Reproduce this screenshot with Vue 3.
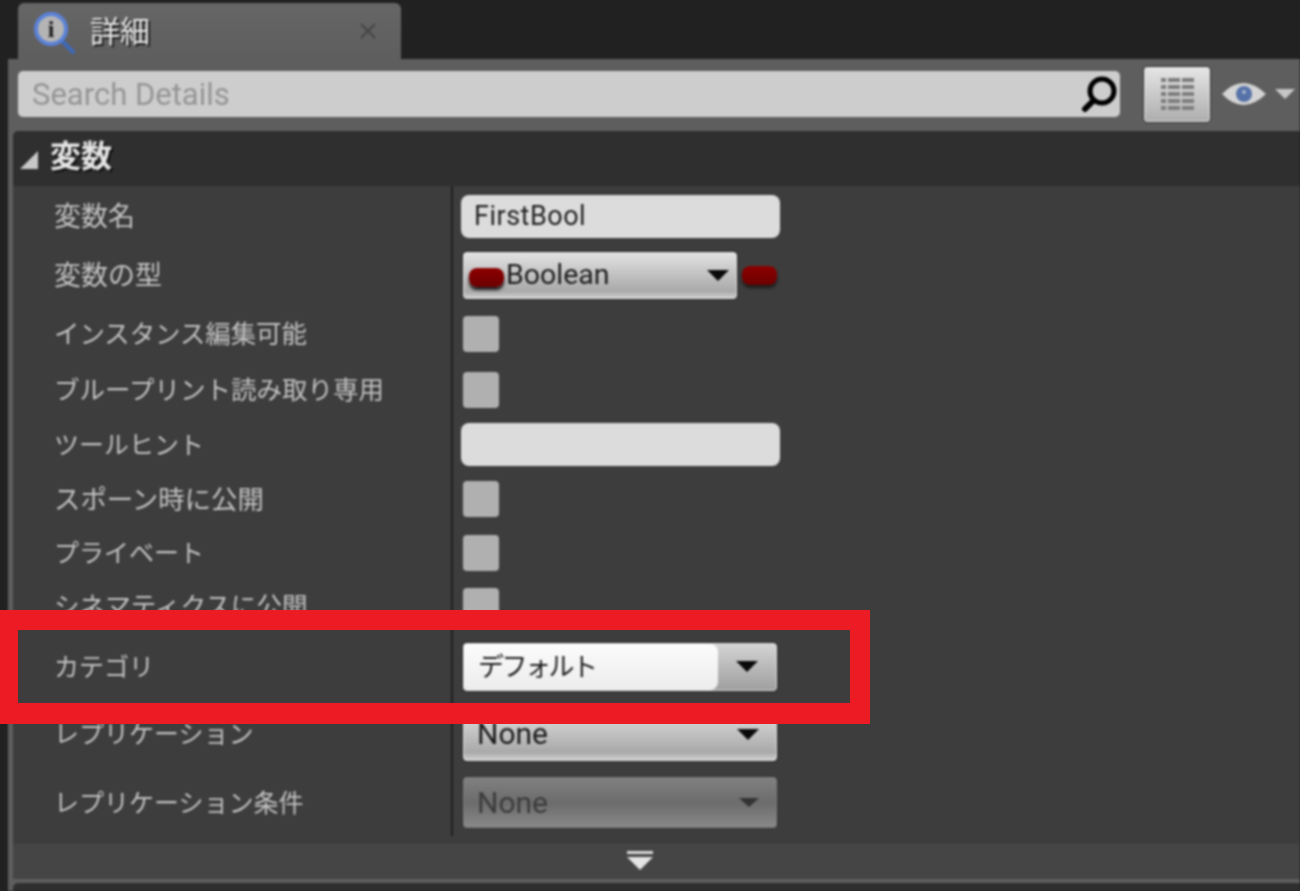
<script setup>
const rows = [
  { label: '変数名', h: 59, size: 27, type: 'text', value: 'FirstBool' },
  { label: '変数の型', h: 59, size: 27, type: 'vartype', value: 'Boolean' },
  { label: 'インスタンス編集可能', h: 57, size: 25.4, type: 'check' },
  { label: 'ブループリント読み取り専用', h: 55, size: 25.5, type: 'check' },
  { label: 'ツールヒント', h: 55, size: 25, type: 'text', value: '' },
  { label: 'スポーン時に公開', h: 54, size: 26.4, type: 'check' },
  { label: 'プライベート', h: 53, size: 25, type: 'check' },
  { label: 'シネマティクスに公開', h: 54, size: 25.6, type: 'check' },
  { label: 'カテゴリ', h: 67, size: 25, type: 'combo', value: 'デフォルト' },
  { label: 'レプリケーション', h: 68, size: 25, type: 'select', value: 'None' },
  { label: 'レプリケーション条件', h: 69, size: 25, type: 'disabled', value: 'None' },
]
const gridRows = [0, 1, 2, 3, 4]
</script>

<template>
  <div class="screen">
    <div class="blurred">
      <div class="tabbar">
        <div class="tab">
          <svg class="tab-icon" width="46" height="46" viewBox="0 0 46 46">
            <path d="M29 30 L41 42" stroke="#3f68b8" stroke-width="4" stroke-linecap="round" />
            <circle cx="19" cy="19" r="15" fill="#b4b4b4" stroke="#5b82d8" stroke-width="4" />
            <text x="19" y="27" text-anchor="middle" class="tab-i">i</text>
          </svg>
          <span class="tab-title">詳細</span>
          <svg class="tab-close" width="16" height="16" viewBox="0 0 16 16">
            <path d="M1 1 L15 15 M15 1 L1 15" stroke="#444" stroke-width="2" />
          </svg>
        </div>
      </div>

      <div class="panel">
        <div class="toolbar">
          <div class="search">
            <span class="search-text">Search Details</span>
            <svg width="38" height="38" viewBox="0 0 38 38">
              <circle cx="21" cy="16" r="12" fill="none" stroke="#000" stroke-width="5" />
              <path d="M12 26 L4 34" stroke="#000" stroke-width="6" stroke-linecap="round" />
            </svg>
          </div>
          <div class="grid-btn">
            <div v-for="r in gridRows" :key="r" class="grid-row">
              <i class="cell small"></i><i class="cell"></i><i class="cell"></i>
            </div>
          </div>
          <svg class="eye" width="46" height="28" viewBox="0 0 46 28">
            <path d="M1 14 Q22 -8 45 14 Q22 36 1 14 Z" fill="#d4d4d4" />
            <circle cx="23" cy="14" r="8" fill="#5672a8" />
            <circle cx="23" cy="12" r="2" fill="#a9b6d0" />
          </svg>
          <span class="eye-arrow"></span>
        </div>

        <div class="section">
          <span class="section-arrow"></span>
          <span class="section-title">変数</span>
        </div>

        <div class="body">
          <div v-for="row in rows" :key="row.label" class="row" :style="{ height: row.h + 'px' }">
            <div class="label" :style="{ fontSize: row.size + 'px' }">{{ row.label }}</div>
            <div class="value">
              <div v-if="row.type === 'text'" class="textbox">{{ row.value }}</div>

              <template v-else-if="row.type === 'vartype'">
                <div class="select vartype">
                  <span class="pin in-select"></span>
                  <span class="select-text">{{ row.value }}</span>
                  <span class="arrow"></span>
                </div>
                <span class="pin"></span>
              </template>

              <div v-else-if="row.type === 'check'" class="check"></div>

              <div v-else-if="row.type === 'combo'" class="select combo">
                <span class="combo-field">{{ row.value }}</span>
                <span class="arrow"></span>
              </div>

              <div v-else-if="row.type === 'select'" class="select wide">
                <span class="select-text">{{ row.value }}</span>
                <span class="arrow"></span>
              </div>

              <div v-else class="select wide off">
                <span class="select-text">{{ row.value }}</span>
                <span class="arrow"></span>
              </div>
            </div>
          </div>
          <div class="body-end"></div>
        </div>

        <div class="footer">
          <svg width="30" height="20" viewBox="0 0 30 20">
            <path d="M2 0 H28 V3 H2 Z" fill="#d8d8d8" />
            <path d="M2 6 H28 L15 19 Z" fill="#e4e4e4" />
          </svg>
        </div>
        <div class="next-section"></div>
      </div>
    </div>

    <div class="callout"></div>
  </div>
</template>

<style>
body {
  background: #212121;
}
</style>

<style scoped>
.screen {
  position: relative;
  width: 1300px;
  height: 891px;
  overflow: hidden;
  background: #212121;
  font-family: Roboto, "Noto Sans CJK JP", sans-serif;
}

.blurred {
  display: flex;
  flex-direction: column;
  height: 100%;
  filter: blur(0.8px);
}

.tabbar {
  height: 59px;
  padding: 3px 0 0 18px;
  box-sizing: border-box;
  flex-shrink: 0;
}

.tab {
  width: 383px;
  height: 56px;
  background: linear-gradient(#666, #5e5e5e);
  border-radius: 6px 6px 0 0;
  display: flex;
  align-items: center;
  padding-left: 14px;
  box-sizing: border-box;
}

.tab-icon {
  flex-shrink: 0;
  margin-top: 3px;
}

.tab-i {
  font-family: "Liberation Serif", serif;
  font-weight: 700;
  font-size: 24px;
  fill: #1c1c1c;
}

.tab-title {
  margin: 0 0 5px 12px;
  font-size: 30px;
  color: #e8e8e8;
  text-shadow: 2px 2px 1px #1c1c1c;
}

.tab-close {
  margin-left: auto;
  margin-right: 25px;
}

.panel {
  margin-left: 8px;
  background: #5e5e5e;
  padding-left: 5px;
  flex: 1;
  display: flex;
  flex-direction: column;
}

.toolbar {
  height: 72px;
  padding: 0 0 2px 5px;
  box-sizing: border-box;
  display: flex;
  align-items: center;
  flex-shrink: 0;
}

.search {
  width: 1102px;
  height: 46px;
  background: #cdcdcd;
  border-radius: 5px;
  display: flex;
  align-items: center;
  justify-content: space-between;
  padding: 0 1px 0 14px;
  box-sizing: border-box;
}

.search-text {
  font-size: 31px;
  color: #959595;
}

.grid-btn {
  width: 68px;
  height: 57px;
  margin-left: 23px;
  background: linear-gradient(#e6e6e6, #adadad);
  border: 1px solid #2e2e2e;
  box-shadow: inset 0 0 0 1px #e2e2e2;
  border-radius: 4px;
  box-sizing: border-box;
  display: flex;
  flex-direction: column;
  justify-content: center;
  align-items: center;
  gap: 3px;
}

.grid-row {
  display: flex;
  gap: 2px;
}

.cell {
  display: block;
  width: 12px;
  height: 4px;
  background: #7d7d7d;
}

.cell.small {
  width: 5px;
}

.eye {
  margin-left: 10px;
  flex-shrink: 0;
}

.eye-arrow {
  margin-left: 8px;
  width: 0;
  height: 0;
  border-left: 10px solid transparent;
  border-right: 10px solid transparent;
  border-top: 10px solid #c6c6c6;
}

.section {
  height: 55px;
  background: #2f2f2f;
  border-radius: 5px 0 0 0;
  display: flex;
  align-items: center;
  padding-left: 7px;
  flex-shrink: 0;
}

.section-arrow {
  width: 0;
  height: 0;
  border-bottom: 18px solid #c8c8c8;
  border-left: 18px solid transparent;
  margin-top: 3px;
}

.section-title {
  margin: 0 0 4px 12px;
  font-size: 31px;
  font-weight: 700;
  line-height: 1;
  color: #e4e4e4;
  text-shadow: 2px 2px 1px #0f0f0f;
}

.body {
  background: #3d3d3d;
  flex-shrink: 0;
}

.row {
  display: flex;
  overflow: hidden;
}

.label {
  width: 440px;
  padding: 0 0 2px 41px;
  box-sizing: border-box;
  color: #c2c2c2;
  display: flex;
  align-items: center;
  white-space: nowrap;
  border-right: 2px solid #202020;
  flex-shrink: 0;
}

.value {
  flex: 1;
  display: flex;
  align-items: center;
  padding: 2px 0 0 10px;
}

.textbox {
  width: 319px;
  height: 43px;
  margin-left: -2px;
  background: #dcdcdc;
  border-radius: 8px;
  font-size: 27px;
  letter-spacing: 0.5px;
  line-height: 43px;
  padding-left: 13px;
  box-sizing: border-box;
  color: #222;
}

.check {
  width: 36px;
  height: 36px;
  background: #b0b0b0;
  border-radius: 4px;
}

.select {
  position: relative;
  height: 47px;
  display: flex;
  align-items: center;
  box-sizing: border-box;
  border: 1px solid #e4e4e4;
  outline: 1px solid #262626;
  border-radius: 3px;
  background: linear-gradient(#e2e2e2, #a9a9a9 85%, #cfcfcf);
  color: #1c1c1c;
}

.vartype {
  width: 274px;
}

.wide {
  width: 314px;
  height: 54px;
}

.wide .select-text {
  margin-left: 13px;
  font-size: 30px;
}

.wide .arrow {
  margin-right: 17px;
}

.off {
  height: 51px;
  background: linear-gradient(#808080, #6c6c6c 50%, #888);
  border-color: #7c7c7c;
  outline-color: #363636;
  color: #3c3c3c;
}

.off .arrow {
  border-left-width: 10px;
  border-right-width: 10px;
  border-top: 9px solid #333;
}

.combo {
  width: 314px;
  height: 48px;
  background: linear-gradient(#d4d4d4, #9f9f9f);
}

.combo-field {
  width: 254px;
  height: 100%;
  padding-left: 14px;
  box-sizing: border-box;
  background: linear-gradient(#fcfcfc, #ececec);
  border-radius: 3px 8px 8px 3px;
  font-size: 26px;
  letter-spacing: -2.5px;
  line-height: 46px;
}

.combo .arrow {
  margin-left: 18px;
  margin-right: 0;
}

.select-text {
  font-size: 28.5px;
  line-height: 1;
}

.vartype .select-text {
  margin-left: 2px;
}

.arrow {
  width: 0;
  height: 0;
  margin-left: auto;
  margin-right: 7px;
  border-left: 11px solid transparent;
  border-right: 11px solid transparent;
  border-top: 11px solid #0a0a0a;
}

.pin {
  width: 35px;
  height: 19px;
  margin-left: 5px;
  background: linear-gradient(#8c0000, #6d0000);
  border-radius: 8px;
  box-shadow: 0 3px 3px #1c1c1c;
  flex-shrink: 0;
}

.pin.in-select {
  margin-left: 5px;
  margin-top: 3px;
}

.body-end {
  height: 6px;
}

.footer {
  height: 37px;
  background: #454545;
  display: flex;
  justify-content: center;
  align-items: center;
  padding-right: 33px;
  box-sizing: border-box;
  flex-shrink: 0;
  border-top: 1px solid #383838;
}

.next-section {
  margin-top: 4px;
  flex: 1;
  background: #2f2f2f;
  border-radius: 5px 0 0 0;
}

.callout {
  position: absolute;
  left: -10px;
  top: 610px;
  width: 880px;
  height: 114px;
  box-sizing: border-box;
  border: 20px solid #ed1c24;
  border-left-width: 28px;
  border-bottom-width: 21px;
}
</style>
